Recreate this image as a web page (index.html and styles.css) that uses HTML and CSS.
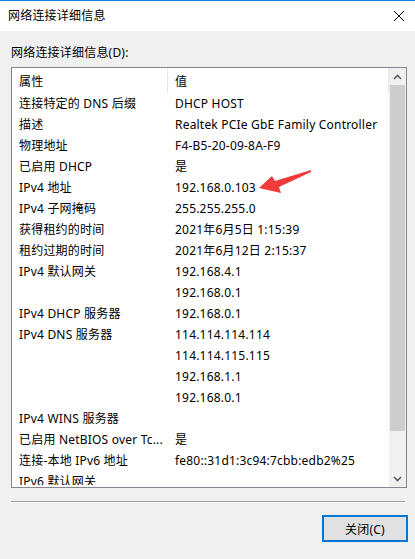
FILE: index.html
```html
<!DOCTYPE html>
<html lang="zh-CN">
<head>
<meta charset="utf-8">
<title>网络连接详细信息</title>
<link rel="stylesheet" href="styles.css">
</head>
<body>
<div class="window">
  <div class="titlebar">
    <span class="title">网络连接详细信息</span>
    <svg class="close" width="12" height="12" viewBox="0 0 12 12"><path d="M1 1L11 11M11 1L1 11" stroke="#000" stroke-width="1" fill="none"/></svg>
  </div>
  <div class="content">
    <div class="label">网络连接详细信息(D):</div>
    <div class="listbox">
      <div class="list">
        <div class="header">
          <div class="hcell c1">属性</div>
          <div class="hcell c2">值</div>
        </div>
        <div class="rows">
          <div class="row"><div class="c1">连接特定的 DNS 后缀</div><div class="c2">DHCP HOST</div></div>
          <div class="row"><div class="c1">描述</div><div class="c2">Realtek PCIe GbE Family Controller</div></div>
          <div class="row"><div class="c1">物理地址</div><div class="c2">F4-B5-20-09-8A-F9</div></div>
          <div class="row"><div class="c1">已启用 DHCP</div><div class="c2">是</div></div>
          <div class="row"><div class="c1">IPv4 地址</div><div class="c2">192.168.0.103</div></div>
          <div class="row"><div class="c1">IPv4 子网掩码</div><div class="c2">255.255.255.0</div></div>
          <div class="row"><div class="c1">获得租约的时间</div><div class="c2">2021年6月5日 1:15:39</div></div>
          <div class="row"><div class="c1">租约过期的时间</div><div class="c2">2021年6月12日 2:15:37</div></div>
          <div class="row"><div class="c1">IPv4 默认网关</div><div class="c2">192.168.4.1</div></div>
          <div class="row"><div class="c1"></div><div class="c2">192.168.0.1</div></div>
          <div class="row"><div class="c1">IPv4 DHCP 服务器</div><div class="c2">192.168.0.1</div></div>
          <div class="row"><div class="c1">IPv4 DNS 服务器</div><div class="c2">114.114.114.114</div></div>
          <div class="row"><div class="c1"></div><div class="c2">114.114.115.115</div></div>
          <div class="row"><div class="c1"></div><div class="c2">192.168.1.1</div></div>
          <div class="row"><div class="c1"></div><div class="c2">192.168.0.1</div></div>
          <div class="row"><div class="c1">IPv4 WINS 服务器</div><div class="c2"></div></div>
          <div class="row"><div class="c1">已启用 NetBIOS over Tc...</div><div class="c2">是</div></div>
          <div class="row"><div class="c1">连接-本地 IPv6 地址</div><div class="c2">fe80::31d1:3c94:7cbb:edb2%25</div></div>
          <div class="row last"><div class="c1">IPv6 默认网关</div><div class="c2"></div></div>
        </div>
      </div>
      <div class="scrollbar">
        <div class="sbtn">
          <svg width="9" height="6" viewBox="0 0 9 6"><path d="M1 5L4.5 1.5L8 5" stroke="#606060" stroke-width="1.6" fill="none"/></svg>
        </div>
        <div class="thumb"></div>
        <div class="track"></div>
        <div class="sbtn">
          <svg width="9" height="6" viewBox="0 0 9 6"><path d="M1 1L4.5 4.5L8 1" stroke="#606060" stroke-width="1.6" fill="none"/></svg>
        </div>
      </div>
    </div>
    <div class="separator"></div>
    <div class="footer">
      <button class="btn">关闭(C)</button>
    </div>
  </div>
  <svg class="annot" width="415" height="559" viewBox="0 0 415 559">
    <path d="M259 188 L272 176 L275 181 L311 170 L311 172 L279 187 L281 193 Z" fill="#f23a3a"/>
  </svg>
</div>
</body>
</html>
```

FILE: styles.css
```css
* { box-sizing: border-box; }
html, body { margin: 0; padding: 0; }
body {
  width: 415px;
  height: 559px;
  overflow: hidden;
  background: #f0f0f0;
  font-family: "Noto Sans", "Noto Sans CJK SC", sans-serif;
  font-size: 12px;
  letter-spacing: 0.2px;
  color: #000;
}
.window {
  position: relative;
  width: 415px;
  height: 559px;
  border-top: 1px solid #1883d7;
}
.titlebar {
  height: 30px;
  background: #fff;
  display: flex;
  align-items: center;
  justify-content: space-between;
  padding: 0 10px 0 8px;
}
.title { font-size: 12px; line-height: 16px; }
.close { display: block; }
.content {
  padding: 0 8px 0 11px;
}
.label {
  height: 36px;
  padding-top: 14px;
  line-height: 16px;
}
.listbox {
  width: 396px;
  height: 421px;
  border: 1px solid #828790;
  background: #fff;
  display: flex;
}
.list {
  flex: 1;
  overflow: hidden;
}
.header {
  height: 25px;
  display: flex;
  align-items: stretch;
}
.hcell {
  display: flex;
  align-items: center;
  border-right: 1px solid #e5e5e5;
}
.c1 { width: 156px; flex: none; padding-left: 7px; white-space: nowrap; overflow: hidden; }
.c2 { flex: 1; padding-left: 7px; white-space: nowrap; }
.rows { display: flex; flex-direction: column; }
.row {
  height: 21px;
  flex: none;
  display: flex;
  align-items: center;
  line-height: 16px;
}
.row.last { height: 14px; align-items: flex-start; padding-top: 3px; overflow: hidden; }
.scrollbar {
  width: 17px;
  flex: none;
  background: #f0f0f0;
  display: flex;
  flex-direction: column;
}
.sbtn {
  height: 17px;
  display: flex;
  align-items: center;
  justify-content: center;
}
.sbtn svg { display: block; }
.thumb {
  height: 346px;
  background: #cdcdcd;
  margin: 0 1px;
}
.track { flex: 1; }
.separator {
  width: 394px;
  height: 2px;
  margin-top: 13px;
  border-top: 1px solid #a0a0a0;
  border-bottom: 1px solid #fff;
}
.footer {
  display: flex;
  justify-content: flex-end;
  padding-top: 12px;
}
.btn {
  width: 86px;
  height: 27px;
  border: 2px solid #0078d7;
  background: #e1e1e1;
  font-family: "Noto Sans", "Noto Sans CJK SC", sans-serif;
  font-size: 12px;
  letter-spacing: 0.2px;
  color: #000;
  padding: 0;
  margin-right: -1px;
}
.annot {
  position: absolute;
  left: 0;
  top: -1px;
  pointer-events: none;
}
```
